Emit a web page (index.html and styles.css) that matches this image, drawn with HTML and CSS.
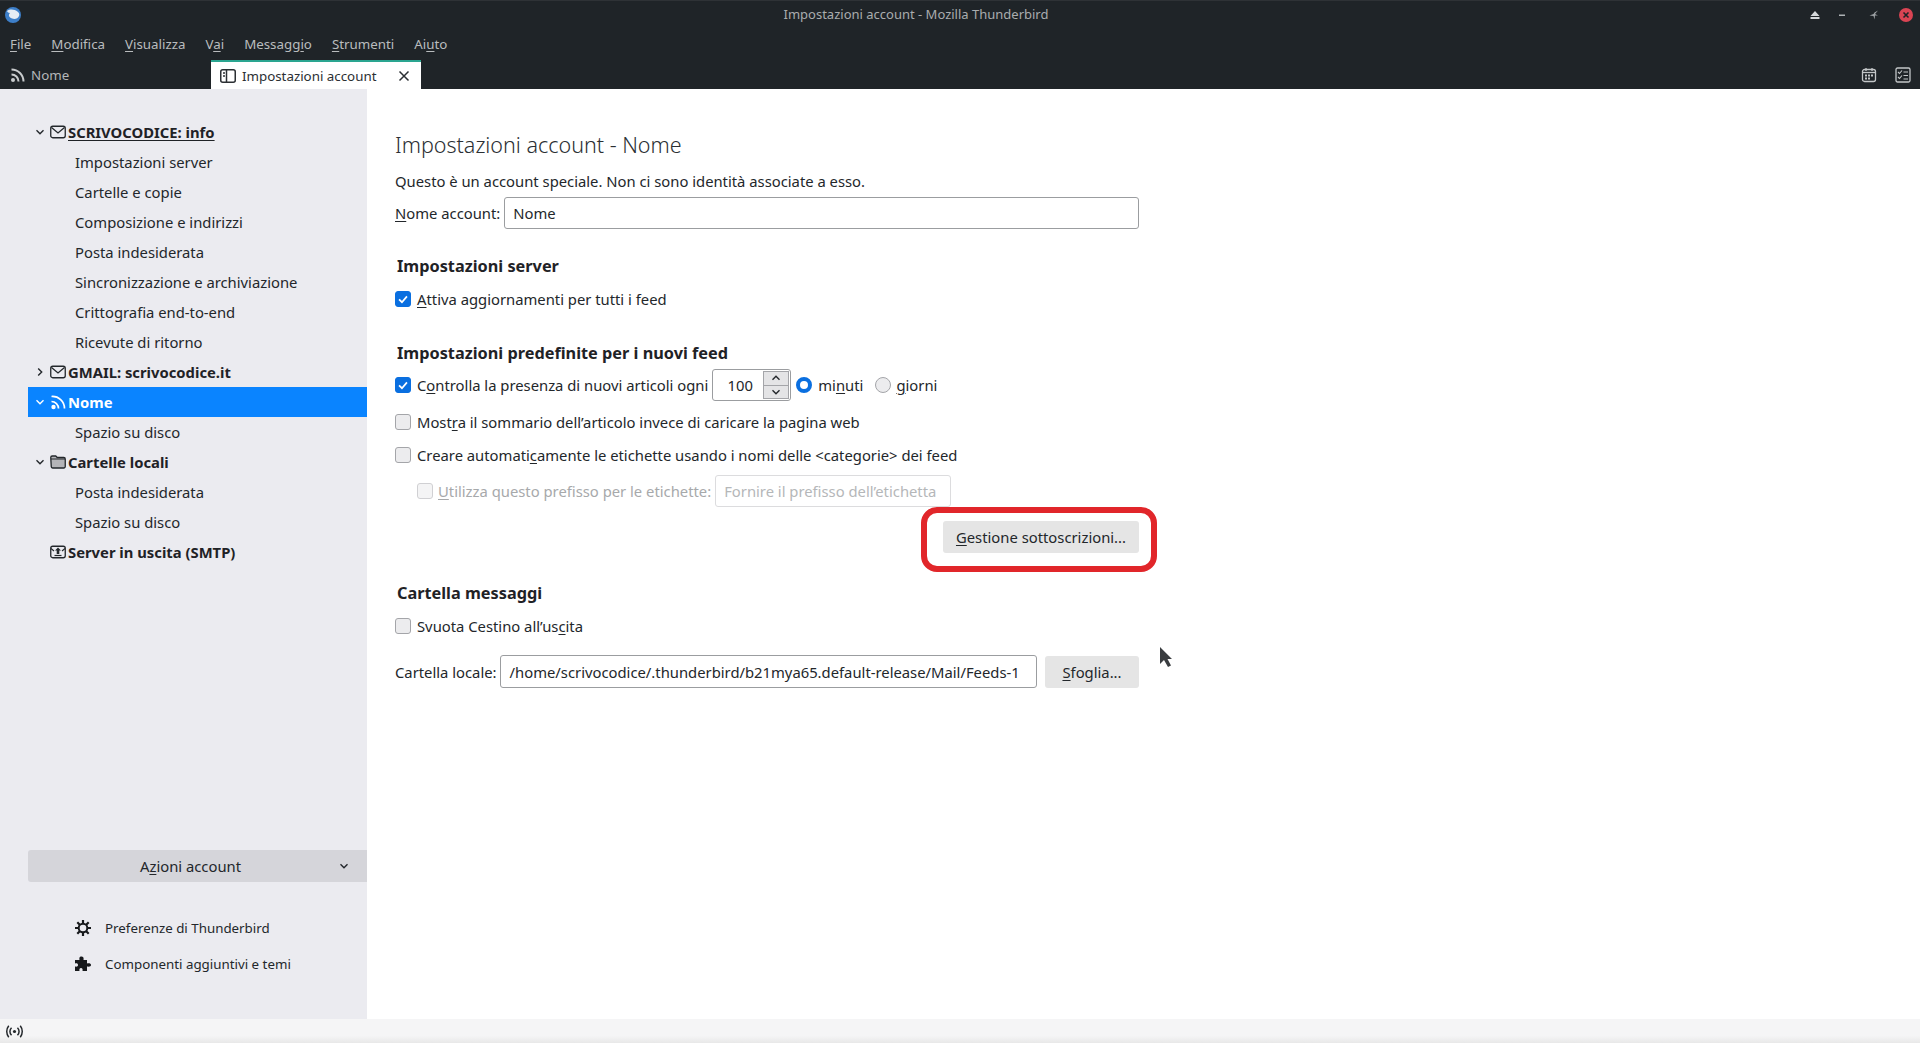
FILE: index.html
```html
<!DOCTYPE html>
<html lang="it">
<head>
<meta charset="utf-8">
<title>Impostazioni account - Mozilla Thunderbird</title>
<link rel="stylesheet" href="styles.css">
</head>
<body>
<div class="app">
  <header class="titlebar">
    <svg class="applogo" viewBox="0 0 16 16" width="16" height="16"><circle cx="8" cy="8" r="8" fill="#3d7fc9"/><path d="M2 4C5 2 9 2 13 5c1.500 1 1.500 3 1 4-1 2.500-4 3.500-7 2.500C4 10.500 3 8 5 6 3.500 6 2.500 5 2 4z" fill="#e6edf5"/></svg>
    <div class="wintitle">Impostazioni account - Mozilla Thunderbird</div>
    <div class="winctl">
      <svg viewBox="0 0 10 10" width="10" height="10"><path d="M5 1 9.500 6H.5zM.5 7h9v2H.5z" fill="#d5d8da"/></svg>
      <svg class="ctl-min" viewBox="0 0 10 10" width="10" height="10"><path d="M2 4.500h6V6H2z" fill="#aeb2b5"/></svg>
      <svg class="ctl-max" viewBox="0 0 10 10" width="10" height="10"><path d="M9 .5 6 4l3 1.500H6L5.500 9.500 4.500 6 .5 5.500 4.500 4 5.500 2.500z" fill="#9da1a4"/></svg>
      <svg class="closebtn" viewBox="0 0 14 14" width="14" height="14"><circle cx="7" cy="7" r="7" fill="#da4453"/><path d="M4.500 4.500l5 5m0-5-5 5" stroke="#1e2327" stroke-width="1.600" fill="none"/></svg>
    </div>
  </header>
  <nav class="menubar">
    <span><u>F</u>ile</span><span><u>M</u>odifica</span><span><u>V</u>isualizza</span><span>V<u>a</u>i</span><span>Messagg<u>i</u>o</span><span><u>S</u>trumenti</span><span>Ai<u>u</u>to</span>
  </nav>
  <div class="tabbar">
    <div class="tab tab-feed">
      <svg class="ic16" viewBox="0 0 16 16"><circle cx="3" cy="13" r="2" fill="#c8cbcd"/><path d="M1.500 7.500a7 7 0 0 1 7 7M1.500 2.500a12 12 0 0 1 12 12" stroke="#c8cbcd" stroke-width="2" fill="none"/></svg>
      <span>Nome</span>
    </div>
    <div class="tab tab-active">
      <svg class="ic16" viewBox="0 0 16 16"><rect x=".75" y="1.750" width="14.500" height="12.500" rx="2" fill="none" stroke="#2b2f33" stroke-width="1.500"/><path d="M6.500 2v12" stroke="#2b2f33" stroke-width="1.500"/><path d="M3 5h2M3 8h2" stroke="#2b2f33" stroke-width="1.300"/></svg>
      <span class="tabtext">Impostazioni account</span>
      <svg class="tabclose" viewBox="0 0 12 12" width="12" height="12"><path d="M1.500 1.500l9 9m0-9-9 9" stroke="#2b2f33" stroke-width="1.500"/></svg>
    </div>
    <div class="tabtools">
      <svg class="ic16" viewBox="0 0 16 16"><rect x="1.500" y="2.500" width="13" height="12" rx="2" fill="none" stroke="#c3c6c8" stroke-width="1.300"/><path d="M1.500 5.500h13" stroke="#c3c6c8" stroke-width="1.300"/><path d="M5 1v3M11 1v3" stroke="#c3c6c8" stroke-width="1.300"/><path d="M4 7.500h2v2H4zM7 7.500h2v2H7zM10 7.500h2v2h-2zM4 10.500h2v2H4zM7 10.500h2v2H7z" fill="#c3c6c8"/></svg>
      <svg class="ic16" viewBox="0 0 16 16"><rect x="1" y="1" width="14" height="14" rx="1.500" fill="none" stroke="#c3c6c8" stroke-width="1.300"/><path d="M3 5l1.500 1.500L7 3.500M3 10l1.500 1.500L7 8.500" stroke="#c3c6c8" stroke-width="1.100" fill="none"/><path d="M8.500 5H13M8.500 8.500H13M8.500 12H13" stroke="#c3c6c8" stroke-width="1.200"/></svg>
    </div>
  </div>
  <div class="main">
    <aside class="sidebar">
      <ul class="tree">
        <li class="tree-row account">
          <svg class="chev" viewBox="0 0 10 10"><path d="M1.500 3.200 5 6.700l3.500-3.500" /></svg>
          <svg class="aicon" viewBox="0 0 16 16"><rect x=".75" y="2.250" width="14.500" height="11.500" rx="2" fill="none" stroke="#23272b" stroke-width="1.300"/><path d="M1.500 3.500 8 9l6.500-5.500" fill="none" stroke="#23272b" stroke-width="1.300"/></svg>
          <span class="current">SCRIVOCODICE: info</span>
        </li>
        <li class="tree-row sub">Impostazioni server</li>
        <li class="tree-row sub">Cartelle e copie</li>
        <li class="tree-row sub">Composizione e indirizzi</li>
        <li class="tree-row sub">Posta indesiderata</li>
        <li class="tree-row sub">Sincronizzazione e archiviazione</li>
        <li class="tree-row sub">Crittografia end-to-end</li>
        <li class="tree-row sub">Ricevute di ritorno</li>
        <li class="tree-row account">
          <svg class="chev" viewBox="0 0 10 10"><path d="M3.200 1.500 6.700 5 3.200 8.500" /></svg>
          <svg class="aicon" viewBox="0 0 16 16"><rect x=".75" y="2.250" width="14.500" height="11.500" rx="2" fill="none" stroke="#23272b" stroke-width="1.300"/><path d="M1.500 3.500 8 9l6.500-5.500" fill="none" stroke="#23272b" stroke-width="1.300"/></svg>
          <span>GMAIL: scrivocodice.it</span>
        </li>
        <li class="tree-row account selected">
          <svg class="chev" viewBox="0 0 10 10"><path d="M1.500 3.200 5 6.700l3.500-3.500" /></svg>
          <svg class="aicon" viewBox="0 0 16 16"><circle cx="3.500" cy="13" r="2.200" fill="#fff"/><path d="M1.500 7.500a7 7 0 0 1 7 7M1.500 2.500a12 12 0 0 1 13 12" stroke="#fff" stroke-width="1.700" fill="none"/></svg>
          <span>Nome</span>
        </li>
        <li class="tree-row sub">Spazio su disco</li>
        <li class="tree-row account">
          <svg class="chev" viewBox="0 0 10 10"><path d="M1.500 3.200 5 6.700l3.500-3.500" /></svg>
          <svg class="aicon" viewBox="0 0 16 16"><path d="M.75 3.500a1.500 1.500 0 0 1 1.500-1.500h3.500l1.500 1.500h6.500a1.500 1.500 0 0 1 1.500 1.500v7.500a1.500 1.500 0 0 1-1.500 1.500h-11a1.500 1.500 0 0 1-1.500-1.500z" fill="#b4b4b8" stroke="#23272b" stroke-width="1.300"/><path d="M1 5h14" stroke="#23272b" stroke-width="1"/></svg>
          <span>Cartelle locali</span>
        </li>
        <li class="tree-row sub">Posta indesiderata</li>
        <li class="tree-row sub">Spazio su disco</li>
        <li class="tree-row account">
          <span class="chev-blank"></span>
          <svg class="aicon" viewBox="0 0 16 16"><rect x=".75" y="2.250" width="14.500" height="11.500" rx="2" fill="none" stroke="#23272b" stroke-width="1.300"/><path d="M1 4.500 4 7M15 4.500 12 7" stroke="#23272b" stroke-width="1.100"/><path d="M8 3.500 11 6.500H9.300V10H6.700V6.500H5z" fill="#23272b"/><path d="M4.500 11.500h7" stroke="#23272b" stroke-width="1.200"/></svg>
          <span>Server in uscita (SMTP)</span>
        </li>
      </ul>
      <div class="side-bottom">
        <div class="actions"><span class="actions-label">A<u>z</u>ioni account</span>
          <svg class="chev dropchev" viewBox="0 0 10 10"><path d="M1.500 3.200 5 6.700l3.500-3.500" /></svg>
        </div>
        <div class="side-links">
          <div class="side-link">
            <svg class="ic16 linkic" viewBox="0 0 16 16"><g stroke="#17191c" stroke-width="2.200"><path d="M8 0v16M0 8h16M2.300 2.300l11.400 11.400M13.700 2.300 2.300 13.700"/></g><circle cx="8" cy="8" r="4.300" fill="#ebebf0" stroke="#17191c" stroke-width="2"/></svg>
            <span>Preferenze di Thunderbird</span>
          </div>
          <div class="side-link">
            <svg class="ic16 linkic" viewBox="0 0 16 16"><path d="M0 4h4.500C4 1 5 .5 6.500.5S9 1.500 8.500 4H12v3.500c2.500-.5 4 .2 4 1.500s-1.500 2-4 1.500V15H7.500c.5-2-.3-3-1.500-3S4 13 4.500 15H0v-4.500c2 .5 3-.3 3-1.500S2 7 0 7.500z" fill="#17191c"/></svg>
            <span>Componenti aggiuntivi e temi</span>
          </div>
        </div>
      </div>
    </aside>
    <section class="content">
      <h1 class="title">Impostazioni account - Nome</h1>
      <p class="desc">Questo è un account speciale. Non ci sono identità associate a esso.</p>
      <div class="row name-row">
        <label class="lbl"><u>N</u>ome account:</label>
        <div class="field name-field">Nome</div>
      </div>
      <h2 class="group first">Impostazioni server</h2>
      <div class="row check-row">
        <span class="cb on"><svg viewBox="0 0 16 16"><path d="M3.500 8.500 6.800 11.700 12.500 5" /></svg></span>
        <span class="lbl"><u>A</u>ttiva aggiornamenti per tutti i feed</span>
      </div>
      <h2 class="group second">Impostazioni predefinite per i nuovi feed</h2>
      <div class="row spin-row">
        <span class="cb on"><svg viewBox="0 0 16 16"><path d="M3.500 8.500 6.800 11.700 12.500 5" /></svg></span>
        <span class="lbl">C<u>o</u>ntrolla la presenza di nuovi articoli ogni</span>
        <div class="spin">
          <span class="spin-val">100</span>
          <div class="spin-btns">
            <span class="spin-btn"><svg viewBox="0 0 10 10" width="10" height="10"><path d="M1.500 6.800 5 3.300l3.500 3.500"/></svg></span>
            <span class="spin-btn"><svg viewBox="0 0 10 10" width="10" height="10"><path d="M1.500 3.200 5 6.700l3.500-3.500"/></svg></span>
          </div>
        </div>
        <span class="radio on"></span><span class="lbl">mi<u>n</u>uti</span>
        <span class="radio off"></span><span class="lbl"><u>g</u>iorni</span>
      </div>
      <div class="row check-row r-summary">
        <span class="cb"></span>
        <span class="lbl">Most<u>r</u>a il sommario dell’articolo invece di caricare la pagina web</span>
      </div>
      <div class="row check-row r-auto">
        <span class="cb"></span>
        <span class="lbl">Creare automati<u>c</u>amente le etichette usando i nomi delle &lt;categorie&gt; dei feed</span>
      </div>
      <div class="row prefix-row">
        <span class="cb dis"></span>
        <span class="lbl disabled"><u>U</u>tilizza questo prefisso per le etichette:</span>
        <div class="field prefix-field">Fornire il prefisso dell’etichetta</div>
      </div>
      <div class="manage-row">
        <button class="btn manage"><u>G</u>estione sottoscrizioni...</button>
      </div>
      <h2 class="group third">Cartella messaggi</h2>
      <div class="row check-row">
        <span class="cb"></span>
        <span class="lbl">Svuota Cestino all’us<u>c</u>ita</span>
      </div>
      <div class="row folder-row">
        <label class="lbl">Cartella locale:</label>
        <div class="field path-field">/home/scrivocodice/.thunderbird/b21mya65.default-release/Mail/Feeds-1</div>
        <button class="btn browse"><u>S</u>foglia...</button>
      </div>
      <div class="annotation"></div>
      <svg class="cursor" viewBox="0 0 14 22" width="14" height="22"><path d="M1 1v17l4-4 4 7 3-1.500-3.500-6.500H13z" fill="#3a3d40"/></svg>
    </section>
  </div>
  <footer class="statusbar">
    <svg viewBox="0 0 18 14" width="17" height="13"><circle cx="9" cy="7" r="1.700" fill="#23272b"/><path d="M5.800 3a5.500 5.500 0 0 0 0 8M12.200 3a5.500 5.500 0 0 1 0 8M2.800 .8a10 10 0 0 0 0 12.400M15.200 .8a10 10 0 0 1 0 12.400" stroke="#23272b" stroke-width="1.600" fill="none"/></svg>
  </footer>
</div>
</body>
</html>
```

FILE: styles.css
```css
* { box-sizing: border-box; }
html, body { margin: 0; padding: 0; height: 100%; overflow: hidden; }
body { font-family: "Noto Sans", sans-serif; font-size: 14.8px; color: #23272b; background: #fff; }
u { text-underline-offset: 2px; text-decoration-thickness: 1px; }
.app { height: 1043px; display: flex; flex-direction: column; }

.titlebar { height: 28px; background: #1f2428; border-top: 1px solid #2e3236; display: flex; align-items: center; position: relative; padding-left: 5px; flex: none; }
.applogo { flex: none; }
.wintitle { position: absolute; left: 0; right: 88px; top: 4px; text-align: center; color: #a9acae; font-size: 13px; line-height: 18px; }
.winctl { margin-left: auto; display: flex; align-items: center; padding-right: 7px; }
.ctl-min { margin-left: 17px; }
.ctl-max { margin-left: 22px; }
.closebtn { margin-left: 20px; }

.menubar { height: 32px; padding-bottom: 1px; background: #1f2428; color: #b9bcbe; display: flex; align-items: center; gap: 20px; padding-left: 10px; flex: none; font-size: 13.33px; }

.tabbar { height: 29px; background: #1f2428; display: flex; align-items: stretch; flex: none; }
.ic16 { width: 16px; height: 16px; flex: none; }
.tab { display: flex; align-items: center; font-size: 13.33px; }
.tab-feed { width: 211px; padding-left: 10px; gap: 5px; color: #b4b7b9; }
.tab-active { width: 210px; background: #fff; border-top: 2px solid #2aa590; padding-left: 9px; color: #2b2f33; }
.tabtext { margin-left: 6px; }
.tabclose { margin-left: auto; margin-right: 11px; }
.tabtools { margin-left: auto; display: flex; align-items: center; gap: 18px; padding-right: 9px; }

.main { flex: 1; display: flex; min-height: 0; }
.sidebar { width: 367px; flex: none; background: #ebebf0; padding: 28px 0 0 28px; display: flex; flex-direction: column; }
.tree { list-style: none; margin: 0; padding: 0; }
.tree-row { height: 30px; display: flex; align-items: center; white-space: nowrap; }
.account { font-weight: 700; padding-left: 7px; color: #1f2226; }
.sub { padding-left: 47px; }
.chev { width: 10px; height: 10px; flex: none; }
.chev path, .spin-btn path { fill: none; stroke: #23272b; stroke-width: 1.400; }
.chev-blank { width: 10px; flex: none; }
.aicon { width: 16px; height: 16px; flex: none; margin: 0 2px 0 5px; }
.current { text-decoration: underline; text-underline-offset: 2px; }
.selected { background: #0a84ff; color: #fff; }
.selected .chev path { stroke: #fff; }

.side-bottom { margin-top: auto; padding-bottom: 43px; }
.actions { height: 32px; background: #d5d5da; border-radius: 3px 0 0 3px; display: flex; align-items: center; justify-content: center; position: relative; padding-right: 14px; }
.dropchev { position: absolute; right: 18px; top: 11px; }
.side-links { display: flex; flex-direction: column; gap: 12px; padding: 34px 0 0 47px; }
.side-link { height: 24px; display: flex; align-items: center; gap: 14px; font-size: 13.33px; }

.content { flex: 1; position: relative; padding: 41px 0 0 28px; }
.title { margin: 0; font-weight: 300; font-size: 21.5px; line-height: 30px; color: #2b2f33; }
.desc { margin: 11px 0 0; line-height: 20px; }
.row { display: flex; align-items: center; white-space: nowrap; }
.lbl.disabled { color: #a7a9ab; }
.field { border: 1px solid #9b9da0; border-radius: 3px; background: #fff; display: flex; align-items: center; white-space: nowrap; }
.name-row { margin-top: 6px; height: 32px; gap: 4px; }
.name-field { width: 635px; height: 32px; padding-left: 8px; }
.group { margin: 0; font-size: 16.3px; font-weight: 700; line-height: 22px; color: #1f2226; padding-left: 2px; }
.group.first { margin-top: 26px; }
.check-row { height: 24px; margin-top: 10px; gap: 6px; }
.group.second { margin-top: 31px; }
.cb { width: 16px; height: 16px; border: 1px solid #a4a5a9; border-radius: 3px; background: #ececee; flex: none; display: inline-flex; }
.cb.on { background: #0a6fe0; border-color: #0a6fe0; }
.cb svg { width: 14px; height: 14px; }
.cb svg path { fill: none; stroke: #fff; stroke-width: 2; }
.cb.dis { background: #f4f4f5; border-color: #d0d0d3; margin-right: 1px; }
.spin-row { height: 32px; margin-top: 5px; gap: 4px; }
.spin-row > .cb { margin-right: 2px; }
.spin { width: 79px; height: 32px; border: 1px solid #9b9da0; border-radius: 3px; display: flex; align-items: center; background: #fff; }
.spin-val { flex: 1; text-align: center; padding-left: 4px; }
.spin-btns { width: 26px; height: 28px; margin-right: 1px; border: 1px solid #a4a5a9; display: flex; flex-direction: column; }
.spin-btn { flex: 1; background: #e4e4e6; display: flex; align-items: center; justify-content: center; }
.spin-btn + .spin-btn { border-top: 1px solid #a4a5a9; }
.radio { width: 16px; height: 16px; border-radius: 50%; flex: none; margin-left: 1px; margin-right: 2px; }
.radio.on { border: 4px solid #0a6fe0; background: #fff; }
.radio.off { border: 1px solid #a4a5a9; background: #ececee; margin-left: 8px; margin-right: 1px; }
.r-summary { margin-top: 9px; }
.r-auto { margin-top: 9px; }
.prefix-row { height: 32px; margin-top: 8px; padding-left: 22px; gap: 4px; }
.prefix-field { width: 236px; height: 32px; border-color: #dcdcde; color: #b5b7b9; padding-left: 8px; }
.manage-row { width: 744px; display: flex; justify-content: flex-end; margin-top: 14px; height: 32px; }
.btn { font: inherit; color: inherit; border: 0; border-radius: 3px; background: #e5e5e5; height: 32px; padding: 0; }
.manage { width: 196px; }
.group.third { margin-top: 29px; }
.folder-row { margin-top: 17px; height: 33px; width: 744px; gap: 3px; }
.path-field { width: 537px; height: 33px; padding-left: 9px; flex: none; }
.browse { width: 94px; margin-left: auto; }

.annotation { position: absolute; left: 554px; top: 418px; width: 236px; height: 65px; border: 6px solid #e1262a; border-radius: 16px; }
.cursor { position: absolute; left: 792px; top: 557px; }

.statusbar { height: 24px; flex: none; background: linear-gradient(#f5f5f6 70%, #e8e8e8); display: flex; align-items: center; padding-left: 6px; }
```
